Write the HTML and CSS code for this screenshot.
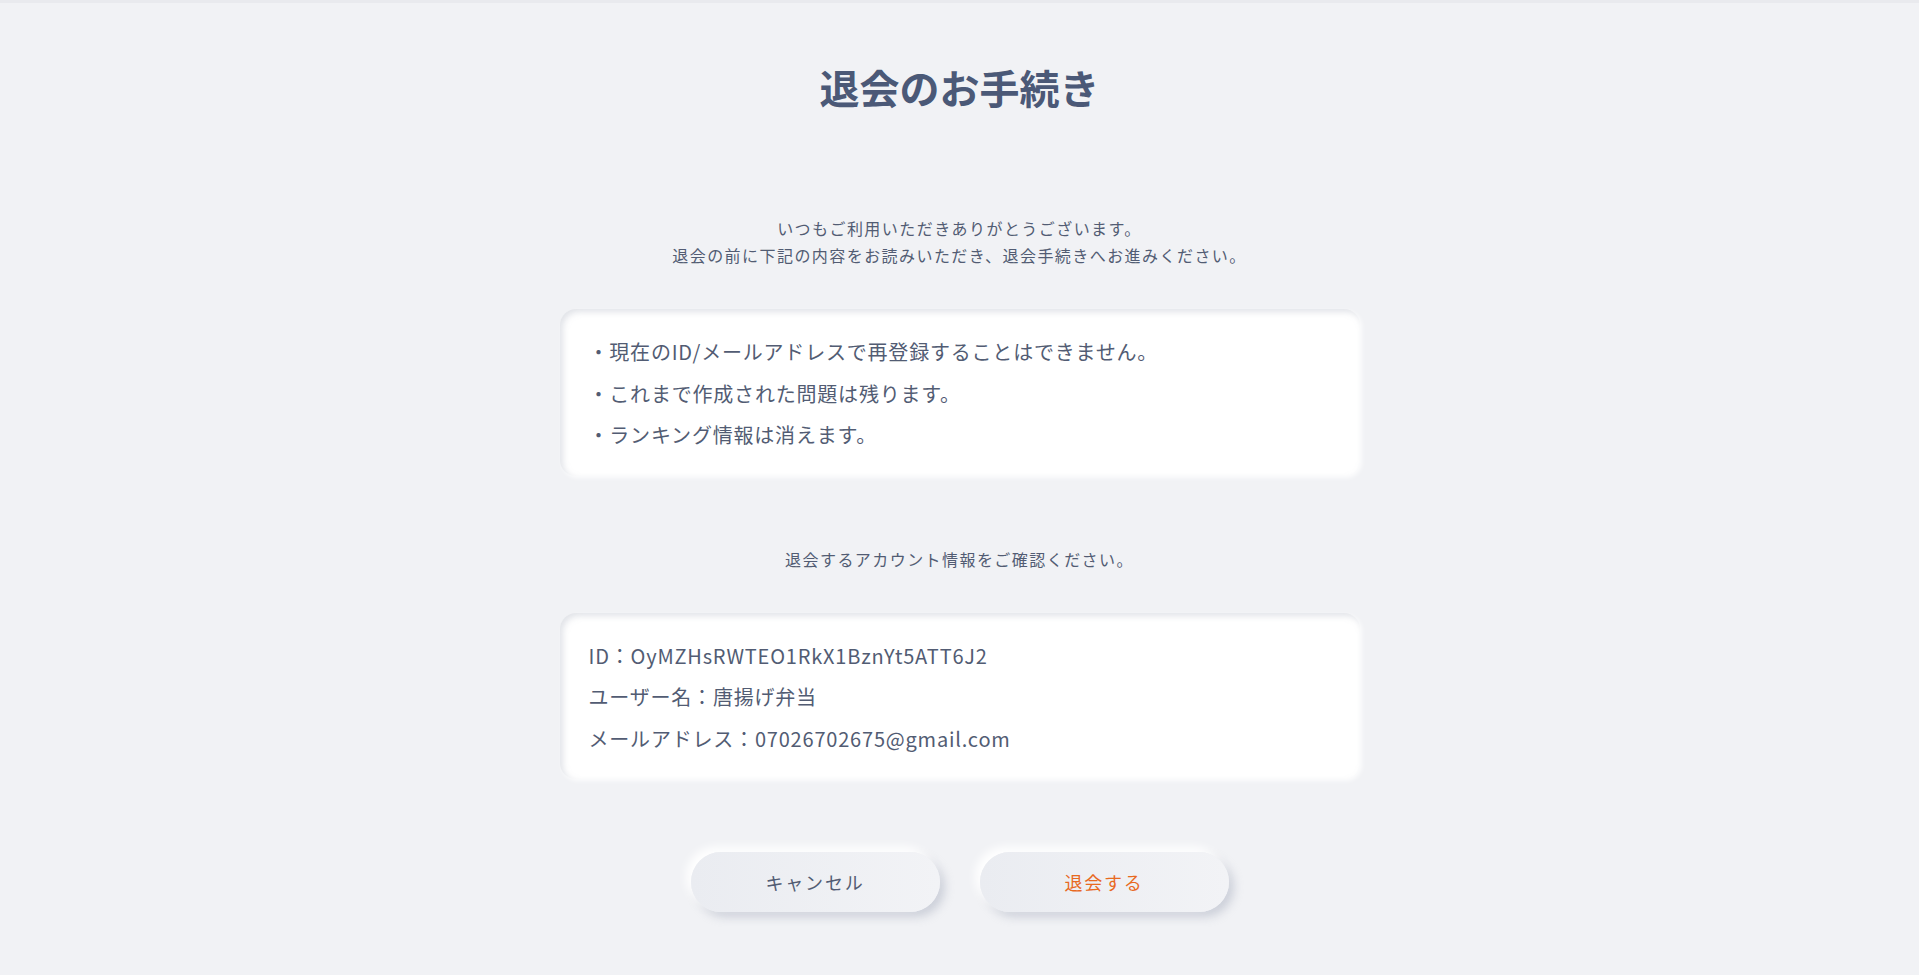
FILE: index.html
```html
<!DOCTYPE html>
<html lang="ja">
<head>
    <meta charset="UTF-8">
    <meta name="viewport" content="width=device-width, initial-scale=1.0">
    <title>退会のお手続き</title>
    <link rel="stylesheet" href="styles.css">
</head>
<body>
    <main class="withdraw">
        <h1 class="withdraw-title">退会のお手続き</h1>

        <p class="lead">
            いつもご利用いただきありがとうございます。<br>
            退会の前に下記の内容をお読みいただき、退会手続きへお進みください。
        </p>

        <!-- 注意事項 -->
        <ul class="card">
            <li>・現在のID/メールアドレスで再登録することはできません。</li>
            <li>・これまで作成された問題は残ります。</li>
            <li>・ランキング情報は消えます。</li>
        </ul>

        <p class="lead lead-confirm">退会するアカウント情報をご確認ください。</p>

        <!-- アカウント情報 -->
        <ul class="card">
            <li>ID：OyMZHsRWTEO1RkX1BznYt5ATT6J2</li>
            <li>ユーザー名：唐揚げ弁当</li>
            <li>メールアドレス：07026702675@gmail.com</li>
        </ul>

        <div class="actions">
            <button class="btn">キャンセル</button>
            <button class="btn btn-danger">退会する</button>
        </div>
    </main>
</body>
</html>
```

FILE: styles.css
```css
body {
    font-family: "Noto Sans CJK JP", "Noto Sans", sans-serif;
    background-color: #f1f2f5;
    color: #525c73;
    margin: 0;
    padding: 0;
    border-top: 3px solid #e9eaee;
    min-height: 972px;
}

.withdraw {
    width: 800px;
    margin: 0 auto;
    display: flex;
    flex-direction: column;
    align-items: center;
}

.withdraw-title {
    font-size: 40px;
    font-weight: 700;
    line-height: 60px;
    letter-spacing: 0;
    color: #4b5977;
    margin: 54px 0 0;
}

.lead {
    font-size: 16px;
    line-height: 27px;
    letter-spacing: 0.09em;
    text-align: center;
    margin: 98px 0 0;
}

.lead-confirm {
    margin-top: 70px;
}

.card {
    list-style: none;
    box-sizing: border-box;
    width: 800px;
    margin: 40px 0 0;
    padding: 22px 29px 20px;
    background-color: #fff;
    border-radius: 16px;
    box-shadow: inset 3px 3px 6px rgba(170, 175, 190, 0.35), 2px 2px 4px rgba(255, 255, 255, 0.8);
}

.card li {
    font-size: 20px;
    line-height: 41.5px;
    letter-spacing: 0.04em;
}

.actions {
    display: flex;
    gap: 40px;
    margin-top: 73px;
}

.btn {
    width: 249px;
    height: 60px;
    border: none;
    border-radius: 30px;
    font-family: inherit;
    font-size: 18px;
    letter-spacing: 0.1em;
    color: #525c73;
    background: linear-gradient(90deg, #eaecf1, #f2f3f6);
    box-shadow: -5px -5px 10px #ffffff, 5px 5px 10px rgba(160, 166, 185, 0.45);
    cursor: pointer;
}

.btn-danger {
    color: #e8691f;
}
```
